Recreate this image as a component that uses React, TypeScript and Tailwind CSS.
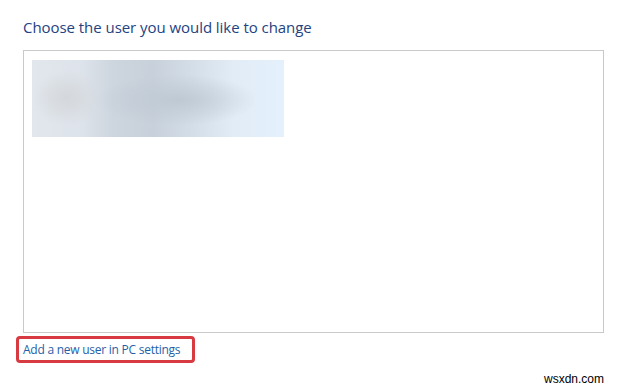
import React from "react";

export default function App() {
  return (
    <div className="relative w-[617px] h-[388px] bg-white overflow-hidden" style={{ fontFamily: '"Open Sans", "Noto Sans", sans-serif' }}>
      <div className="pl-[23px] pt-[17px] flex flex-col">
        <h1 className="text-[15px] leading-[20px] text-[#24437f] font-normal tracking-[-0.05px]">
          Choose the user you would like to change
        </h1>
        <div className="mt-[13px] w-[581px] h-[283px] border border-[#c9c9c9] pt-[9px] pl-[8px]">
          <div className="w-[252px] h-[77px] bg-[radial-gradient(ellipse_35px_28px_at_35px_38px,#d4d7db_0%,rgba(212,215,219,0)_100%),radial-gradient(ellipse_80px_26px_at_145px_40px,#bfc9d4_0%,rgba(191,201,212,0)_100%),linear-gradient(90deg,#e2e7ed_0%,#dde3ea_20%,#cdd5de_32%,#c8d1db_48%,#d5dfe9_65%,#e1ecf7_80%,#e4f0fb_100%)]" />
        </div>
        <div className="-ml-[7px] mt-[3px] w-[179px] h-[27px] border-[3px] border-[#d73a40] rounded-[4px] flex items-center pl-[4px]">
          <span className="text-[12px] leading-[16px] text-[#1f5fa8] tracking-[-0.25px]">Add a new user in PC settings</span>
        </div>
      </div>
      <div className="absolute left-[544px] top-[372px] text-[12px] leading-[14px] text-black" style={{ fontFamily: '"Liberation Sans", Arial, sans-serif' }}>
        wsxdn.com
      </div>
    </div>
  );
}
